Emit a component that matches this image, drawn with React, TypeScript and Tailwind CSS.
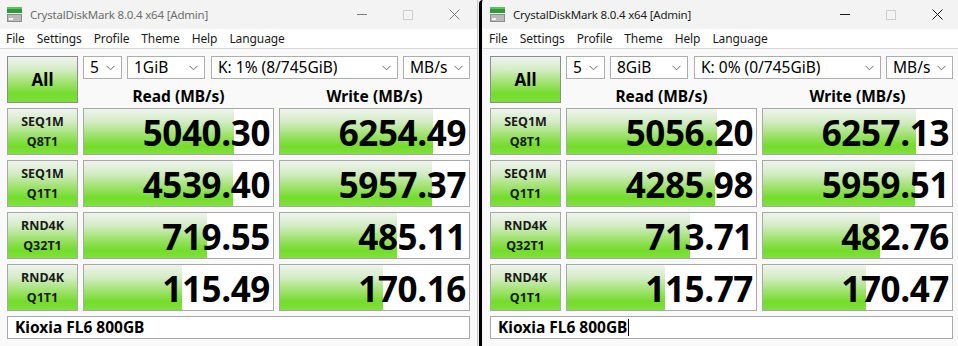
const FILL =
  "bg-[linear-gradient(to_bottom,#eef4ec_0%,#d4ecc6_28%,#9ee26c_58%,#74dc2c_82%,#80e03c_100%)] bg-no-repeat";

type Row = { a: string; b: string; read: string; write: string; rf: number; wf: number };

const LEFT: Row[] = [
  { a: "SEQ1M", b: "Q8T1", read: "5040.30", write: "6254.49", rf: 150, wf: 153 },
  { a: "SEQ1M", b: "Q1T1", read: "4539.40", write: "5957.37", rf: 149, wf: 152 },
  { a: "RND4K", b: "Q32T1", read: "719.55", write: "485.11", rf: 123, wf: 117 },
  { a: "RND4K", b: "Q1T1", read: "115.49", write: "170.16", rf: 98, wf: 103 },
];

const RIGHT: Row[] = [
  { a: "SEQ1M", b: "Q8T1", read: "5056.20", write: "6257.13", rf: 150, wf: 153 },
  { a: "SEQ1M", b: "Q1T1", read: "4285.98", write: "5959.51", rf: 148, wf: 152 },
  { a: "RND4K", b: "Q32T1", read: "713.71", write: "482.76", rf: 123, wf: 117 },
  { a: "RND4K", b: "Q1T1", read: "115.77", write: "170.47", rf: 98, wf: 103 },
];

const AppIcon = () => (
  <svg width="17" height="17" viewBox="0 0 17 17">
    <rect x="1" y="1" width="15" height="6" fill="#2f9a3a" />
    <rect x="1" y="1" width="15" height="2" fill="#5cc45e" />
    <rect x="1" y="8" width="15" height="8" fill="#8c8c8c" />
    <rect x="2" y="9" width="13" height="6" fill="#b9b9b9" />
    <rect x="3" y="12" width="4" height="2" fill="#f4f4f4" />
  </svg>
);

const Chevron = () => (
  <svg width="9" height="6" viewBox="0 0 9 6" className="shrink-0">
    <path d="M0.5 0.8 L4.5 4.8 L8.5 0.8" fill="none" stroke="#6a6a6a" strokeWidth="1" />
  </svg>
);

const Combo = ({ text, w }: { text: string; w: string }) => (
  <div className={`${w} h-[23px] flex items-center justify-between bg-white border border-[#adadad] pl-[6px] pr-[6px]`}>
    <span className="text-[15.5px] leading-none text-black">{text}</span>
    <Chevron />
  </div>
);

const Score = ({ value, fill }: { value: string; fill: number }) => (
  <div
    className={`h-[47px] border border-[#a8a8a8] bg-white ${FILL} flex items-center justify-end pr-[3px]`}
    style={{ backgroundSize: `${fill}px 100%` }}
  >
    <span className="font-['Open_Sans'] font-bold text-[35px] leading-[45px] tracking-[-0.4px] text-black pt-[1px]">
      {value}
    </span>
  </div>
);

const Window = ({
  title,
  active,
  size,
  drive,
  rows,
  cursor,
}: {
  title: string;
  active: boolean;
  size: string;
  drive: string;
  rows: Row[];
  cursor?: boolean;
}) => {
  const ink = active ? "text-[#1b1b1b]" : "text-[#6e6e6e]";
  const glyph = active ? "#1b1b1b" : "#7a7a7a";
  return (
    <div className="w-[477px] h-[346px] shrink-0 flex flex-col bg-[#f9f9f9] font-['Noto_Sans',sans-serif]">
      <div className="h-[29px] bg-[#f3f3f3] flex items-center pl-[6px]">
        <AppIcon />
        <span className={`ml-[7px] text-[11.5px] tracking-[-0.2px] ${ink}`}>{title}</span>
        <div className="ml-auto flex items-center">
          <div className="w-[46px] h-[29px] flex items-center justify-center">
            <div className="w-[10px] h-px" style={{ background: glyph }} />
          </div>
          <div className="w-[46px] h-[29px] flex items-center justify-center">
            <div className="w-[10px] h-[10px] border border-[#cfcfcf]" />
          </div>
          <div className="w-[46px] h-[29px] flex items-center justify-center">
            <svg width="11" height="11" viewBox="0 0 11 11">
              <path d="M0.5 0.5 L10.5 10.5 M10.5 0.5 L0.5 10.5" stroke={glyph} strokeWidth="1" />
            </svg>
          </div>
        </div>
      </div>
      <div className="h-[20px] bg-white flex items-center pl-[6px] gap-[12px] text-[12px] text-[#1b1b1b] tracking-[-0.1px] border-b border-[#d6d6d6]">
        <span>File</span>
        <span>Settings</span>
        <span>Profile</span>
        <span>Theme</span>
        <span>Help</span>
        <span>Language</span>
      </div>
      <div className="pt-[7px] pl-[7px] flex flex-col">
        <div className="flex gap-[5px]">
          <div className={`w-[71px] h-[47px] border border-[#8c8c8c] ${FILL} bg-[length:100%_100%] flex items-center justify-center`}>
            <span className="font-bold text-[17px] text-black">All</span>
          </div>
          <div className="w-[387px] flex flex-col">
            <div className="flex h-[23px]">
              <Combo text="5" w="w-[39px]" />
              <div className="w-[5px]" />
              <Combo text={size} w="w-[78px]" />
              <div className="w-[6px]" />
              <Combo text={drive} w="w-[187px]" />
              <div className="w-[5px]" />
              <Combo text="MB/s" w="w-[67px]" />
            </div>
            <div className="h-[29px] grid grid-cols-[191px_191px] gap-[5px] items-center pt-[7px]">
              <div className="text-center font-bold text-[15.5px] leading-none text-black">Read (MB/s)</div>
              <div className="text-center font-bold text-[15.5px] leading-none text-black">Write (MB/s)</div>
            </div>
          </div>
        </div>
        <div className="flex flex-col gap-[5px]">
          {rows.map((r, i) => (
            <div key={i} className="grid grid-cols-[71px_191px_191px] gap-[5px]">
              <div className={`h-[47px] border border-[#a8a8a8] ${FILL} bg-[length:100%_100%] flex flex-col items-center justify-center`}>
                <span className="font-bold text-[12.5px] leading-[20px] text-[#1a1a1a]">{r.a}</span>
                <span className="font-bold text-[12.5px] leading-[20px] text-[#1a1a1a]">{r.b}</span>
              </div>
              <Score value={r.read} fill={r.rf} />
              <Score value={r.write} fill={r.wf} />
            </div>
          ))}
        </div>
        <div className="mt-[5px] w-[463px] h-[23px] border border-[#a8a8a8] bg-white flex items-center pl-[7px]">
          <span className="font-bold text-[15.5px] leading-none text-black">Kioxia FL6 800GB</span>
          {cursor && <span className="w-px h-[17px] bg-black ml-px" />}
        </div>
      </div>
    </div>
  );
};

export default function App() {
  return (
    <div className="w-[958px] h-[346px] overflow-hidden flex bg-[#f9f9f9]">
      <div className="border-r border-[#c9c9c9]">
        <Window title="CrystalDiskMark 8.0.4 x64 [Admin]" active={false} size="1GiB" drive="K: 1% (8/745GiB)" rows={LEFT} />
      </div>
      <div className="w-[1px] bg-[#ececec] shrink-0" />
      <div className="w-[4px] shrink-0 bg-[#f3f3f3] border-l-[3px] border-black rounded-tl-[6px]" />
      <Window title="CrystalDiskMark 8.0.4 x64 [Admin]" active size="8GiB" drive="K: 0% (0/745GiB)" rows={RIGHT} cursor />
    </div>
  );
}
